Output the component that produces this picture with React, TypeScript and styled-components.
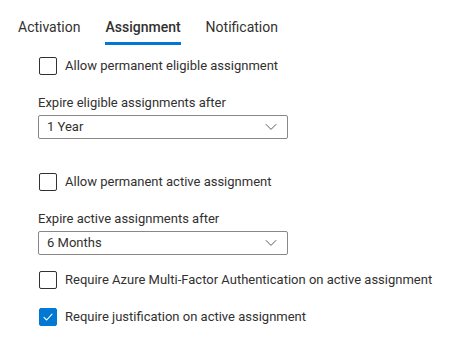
import React, { useState } from 'react';
import styled, { createGlobalStyle } from 'styled-components';

const GlobalStyle = createGlobalStyle`
  body {
    margin: 0;
    background: #fff;
    font-family: Roboto, 'Segoe UI', 'Open Sans', sans-serif;
    color: #323130;
  }
`;

const tabs = ['Activation', 'Assignment', 'Notification'];

export default function App() {
  const [active, setActive] = useState('Assignment');
  const [checks, setChecks] = useState({
    permEligible: false,
    permActive: false,
    mfa: false,
    justification: true,
  });

  const toggle = (key: keyof typeof checks) => setChecks(prev => ({ ...prev, [key]: !prev[key] }));

  return (
    <Page>
      <GlobalStyle />
      <TabBar>
        {tabs.map(t => (
          <Tab key={t} $active={t === active} onClick={() => setActive(t)}>
            {t}
          </Tab>
        ))}
      </TabBar>
      <Content>
        <CheckRow $top={11}>
          <Box $checked={checks.permEligible} onClick={() => toggle('permEligible')}>
            {checks.permEligible && <CheckMark />}
          </Box>
          <CheckLabel>Allow permanent eligible assignment</CheckLabel>
        </CheckRow>

        <FieldLabel>Expire eligible assignments after</FieldLabel>
        <Dropdown>
          <span>1 Year</span>
          <Chevron />
        </Dropdown>

        <CheckRow $top={33}>
          <Box $checked={checks.permActive} onClick={() => toggle('permActive')}>
            {checks.permActive && <CheckMark />}
          </Box>
          <CheckLabel>Allow permanent active assignment</CheckLabel>
        </CheckRow>

        <FieldLabel>Expire active assignments after</FieldLabel>
        <Dropdown>
          <span>6 Months</span>
          <Chevron />
        </Dropdown>

        <CheckRow $top={15}>
          <Box $checked={checks.mfa} onClick={() => toggle('mfa')}>
            {checks.mfa && <CheckMark />}
          </Box>
          <CheckLabel>Require Azure Multi-Factor Authentication on active assignment</CheckLabel>
        </CheckRow>

        <CheckRow $top={17}>
          <Box $checked={checks.justification} onClick={() => toggle('justification')}>
            {checks.justification && <CheckMark />}
          </Box>
          <CheckLabel>Require justification on active assignment</CheckLabel>
        </CheckRow>
      </Content>
    </Page>
  );
}

function CheckMark() {
  return (
    <svg width="12" height="12" viewBox="0 0 12 12" fill="none">
      <path d="M2 6.4 L4.7 9 L10 3.2" stroke="#fff" strokeWidth="1.1" strokeLinecap="round" strokeLinejoin="round" />
    </svg>
  );
}

function Chevron() {
  return (
    <svg width="12" height="8" viewBox="0 0 12 8" fill="none">
      <path d="M0.8 1.2 L6 6.4 L11.2 1.2" stroke="#605e5c" strokeWidth="1" />
    </svg>
  );
}

const Page = styled.div`
  width: 452px;
  height: 343px;
  font-size: 13px;
`;

const TabBar = styled.div`
  display: flex;
  gap: 25px;
  padding-left: 18px;
  font-size: 14px;
`;

const Tab = styled.div<{ $active: boolean }>`
  padding: 17px 0 5px;
  line-height: 20px;
  font-weight: ${p => (p.$active ? 500 : 400)};
  border-bottom: 3px solid ${p => (p.$active ? '#0078d4' : 'transparent')};
  cursor: pointer;
`;

const Content = styled.div`
  padding-left: 38px;
  display: flex;
  flex-direction: column;
  align-items: flex-start;
`;

const CheckRow = styled.label<{ $top: number }>`
  display: flex;
  align-items: center;
  gap: 8px;
  margin-top: ${p => p.$top}px;
  padding-left: 1px;
  cursor: pointer;
  white-space: nowrap;
`;

const Box = styled.span<{ $checked: boolean }>`
  width: 18px;
  height: 18px;
  box-sizing: border-box;
  border-radius: 2px;
  border: 1px solid ${p => (p.$checked ? '#0078d4' : '#323130')};
  background: ${p => (p.$checked ? '#0078d4' : '#fff')};
  display: flex;
  align-items: center;
  justify-content: center;
`;

const CheckLabel = styled.span`
  line-height: 20px;
`;

const FieldLabel = styled.div`
  margin-top: 17px;
  line-height: 20px;
`;

const Dropdown = styled.div`
  margin-top: 2px;
  width: 250px;
  height: 24px;
  box-sizing: border-box;
  border: 1px solid #8a8886;
  border-radius: 2px;
  padding: 0 10px 0 8px;
  display: flex;
  align-items: center;
  justify-content: space-between;
  line-height: 20px;
`;
